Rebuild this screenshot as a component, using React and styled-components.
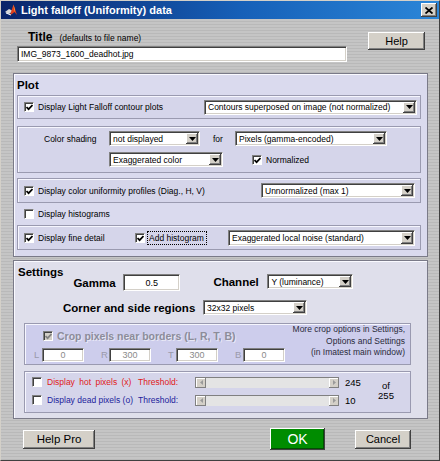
import React from "react";
import styled, { createGlobalStyle } from "styled-components";

const GlobalStyle = createGlobalStyle`
  html, body {
    margin: 0;
    padding: 0;
  }
  body {
    font-family: "Liberation Sans", Arial, sans-serif;
    background: #c0c0c0;
  }
  * {
    box-sizing: border-box;
  }
`;

// Small drawings
const CheckMark = ({ color = "#000" }) => (
  <svg width="7" height="7" viewBox="0 0 7 7">
    <path d="M0.5 3 L2.6 5.2 L6.5 1" fill="none" stroke={color} strokeWidth="1.7" />
  </svg>
);

const DownArrow = () => (
  <svg width="7" height="4" viewBox="0 0 7 4">
    <path d="M0 0 H7 L3.5 4 Z" fill="#000" />
  </svg>
);

const AppIcon = () => (
  <svg width="15" height="14" viewBox="0 0 15 14">
    <path d="M1 9 L5 6 L9 8 L5 11 Z" fill="#d8d8d8" />
    <path d="M6 12 L9.5 1.5 L13 12 L10.5 9 L8 11 Z" fill="#e0401c" />
    <path d="M9.5 1.5 L11 7 L10.5 9 Z" fill="#ffb040" />
    <path d="M2 10 L7 12" stroke="#ffffff" strokeWidth="1" />
  </svg>
);

const CloseIcon = () => (
  <svg width="8" height="7" viewBox="0 0 8 7">
    <path d="M0.5 0.5 L7.5 6.5 M7.5 0.5 L0.5 6.5" stroke="#000" strokeWidth="1.8" />
  </svg>
);

const SideArrow = ({ dir }) => (
  <svg width="3" height="5" viewBox="0 0 3 5">
    <path d={dir === "left" ? "M3 0 V5 L0 2.5 Z" : "M0 0 V5 L3 2.5 Z"} fill="#9a9a9a" />
  </svg>
);

// Window frame
const Window = styled.div`
  width: 440px;
  height: 461px;
  display: flex;
  flex-direction: column;
  border: 1px solid;
  border-color: #d4d0c8 #404040 #404040 #d4d0c8;
  background: repeating-linear-gradient(
    to bottom,
    #c5c5c5 0 2px,
    #b9b9b9 2px 3px
  );
  color: #000;
  font-size: 8.5px;
`;

const TitleBar = styled.div`
  height: 18px;
  flex: none;
  display: flex;
  align-items: center;
  padding: 0 2px 0 3px;
  background: linear-gradient(to right, #0a246a 0%, #1660b8 55%, #2b86d8 100%);
  color: #fff;
  font-size: 11px;
  font-weight: bold;
  gap: 2px;
`;

const TitleText = styled.span`
  flex: 1;
`;

const CloseButton = styled.div`
  width: 16px;
  height: 14px;
  display: flex;
  align-items: center;
  justify-content: center;
  background: #d4d0c8;
  box-shadow: inset -1px -1px 0 #404040, inset 1px 1px 0 #fff,
    inset -2px -2px 0 #808080;
`;

const Content = styled.div`
  flex: 1;
  display: flex;
  flex-direction: column;
  padding: 0 11px 0 12px;
`;

// Header
const Header = styled.div`
  height: 54px;
  padding: 11px 3px 0 4px;
  display: flex;
  justify-content: space-between;
  align-items: flex-start;
`;

const TitleRow = styled.div`
  height: 14px;
  line-height: 14px;
  padding-left: 11px;
  display: flex;
  align-items: baseline;
  gap: 7px;
`;

const BigLabel = styled.span`
  font-size: ${(p) => p.$size || 11.5}px;
  font-weight: bold;
`;

const TextBox = styled.div`
  width: ${(p) => p.$w}px;
  height: ${(p) => p.$h}px;
  margin-top: ${(p) => p.$mt || 0}px;
  display: flex;
  align-items: center;
  justify-content: ${(p) => (p.$center ? "center" : "flex-start")};
  padding: 0 3px;
  background: #fff;
  border: 1px solid;
  border-color: #808080 #fff #fff #808080;
  box-shadow: inset 1px 1px 0 #404040, inset -1px -1px 0 #d4d0c8;
  font-size: ${(p) => p.$fs || 8.5}px;
  color: ${(p) => (p.$disabled ? "#8a8a8a" : "#000")};
`;

const Button = styled.div`
  width: ${(p) => p.$w}px;
  height: ${(p) => p.$h}px;
  margin-top: ${(p) => p.$mt || 0}px;
  margin-left: ${(p) => p.$ml || 0}px;
  display: flex;
  align-items: center;
  justify-content: center;
  background: ${(p) => (p.$green ? "#008c00" : "#d4d0c8")};
  color: ${(p) => (p.$green ? "#fff" : "#000")};
  font-size: ${(p) => p.$fs || 11}px;
  box-shadow: inset -1px -1px 0 #404040, inset 1px 1px 0 #fff,
    inset -2px -2px 0 ${(p) => (p.$green ? "#005000" : "#808080")};
`;

// Panels
const Panel = styled.div`
  padding: ${(p) => p.$pad};
  margin-top: ${(p) => p.$mt || 0}px;
  background: ${(p) => p.$bg};
  border: 1px solid #7a7a88;
  box-shadow: inset 1px 1px 0 #fafaff;
  display: flex;
  flex-direction: column;
`;

const PanelHeading = styled.div`
  height: 14px;
  line-height: 14px;
  font-size: 11.5px;
  font-weight: bold;
  margin-bottom: ${(p) => p.$mb || 0}px;
`;

const SubPanel = styled.div`
  height: ${(p) => (p.$h ? `${p.$h}px` : "auto")};
  margin-top: ${(p) => p.$mt || 0}px;
  margin-left: ${(p) => p.$ml || 0}px;
  width: ${(p) => (p.$w ? `${p.$w}px` : "auto")};
  padding: ${(p) => p.$pad || "0"};
  background: ${(p) => p.$bg || "#d5d5ea"};
  border: 1px solid #9a9ab0;
  box-shadow: inset 1px 1px 0 #f6f6fe;
  display: flex;
  flex-direction: ${(p) => (p.$col ? "column" : "row")};
  align-items: ${(p) => (p.$col ? "stretch" : "center")};
  justify-content: space-between;
`;

const Row = styled.div`
  display: flex;
  align-items: center;
  height: ${(p) => (p.$h ? `${p.$h}px` : "auto")};
  margin-top: ${(p) => p.$mt || 0}px;
  padding-left: ${(p) => p.$pl || 0}px;
`;

const CheckLabel = styled.div`
  display: flex;
  align-items: center;
  gap: 4px;
  width: ${(p) => (p.$w ? `${p.$w}px` : "auto")};
  margin-left: ${(p) => p.$ml || 0}px;
  flex: none;
`;

const Box = styled.span`
  width: 10px;
  height: 10px;
  flex: none;
  display: flex;
  align-items: center;
  justify-content: center;
  background: ${(p) => (p.$disabled ? "#d4d0c8" : "#fff")};
  border: 1px solid;
  border-color: #808080 #fff #fff #808080;
  box-shadow: inset 1px 1px 0 #404040;
  padding: 1px 0 0 1px;
`;

const Focus = styled.span`
  outline: 1px dotted #000;
  outline-offset: 1px;
  padding-right: 1px;
`;

const Checkbox = ({ checked, disabled }) => (
  <Box $disabled={disabled}>{checked && <CheckMark color={disabled ? "#808080" : "#000"} />}</Box>
);

const SelectBox = styled.div`
  width: ${(p) => p.$w}px;
  height: ${(p) => p.$h || 15}px;
  margin-left: ${(p) => p.$ml || 0}px;
  flex: none;
  display: flex;
  align-items: stretch;
  padding: 1px 1px 1px 3px;
  background: #fff;
  border: 1px solid;
  border-color: #808080 #fff #fff #808080;
  box-shadow: inset 1px 1px 0 #404040, inset -1px -1px 0 #d4d0c8;
  font-size: 8.5px;
`;

const SelectText = styled.span`
  flex: 1;
  display: flex;
  align-items: center;
  white-space: nowrap;
  overflow: hidden;
`;

const ArrowButton = styled.span`
  width: 12px;
  flex: none;
  display: flex;
  align-items: center;
  justify-content: center;
  background: #d4d0c8;
  box-shadow: inset -1px -1px 0 #404040, inset 1px 1px 0 #fff,
    inset -2px -2px 0 #808080;
`;

const Dropdown = ({ w, h, ml, children }) => (
  <SelectBox $w={w} $h={h} $ml={ml}>
    <SelectText>{children}</SelectText>
    <ArrowButton>
      <DownArrow />
    </ArrowButton>
  </SelectBox>
);

const Plain = styled.span`
  width: ${(p) => (p.$w ? `${p.$w}px` : "auto")};
  margin-left: ${(p) => p.$ml || 0}px;
  flex: none;
`;

// Settings
const SettingsTop = styled.div`
  display: flex;
  align-items: flex-start;
`;

const FieldGroup = styled.div`
  display: flex;
  align-items: center;
  margin-top: 9px;
  margin-left: ${(p) => p.$ml}px;
`;

const FieldLabel = styled.span`
  width: ${(p) => p.$w}px;
  font-size: 11.5px;
  font-weight: bold;
  flex: none;
`;

const CropBody = styled.div`
  display: flex;
  flex-direction: column;
  padding: 2px 0 0 9px;
`;

const GreyTitle = styled.span`
  font-size: 10.5px;
  font-weight: bold;
  color: #8c8c9a;
  text-shadow: 1px 1px 0 #e8e8f6;
  line-height: 14px;
`;

const CropNote = styled.div`
  align-self: flex-start;
  margin-top: 0;
  padding-right: 5px;
  text-align: right;
  font-size: 8.5px;
  line-height: 11.5px;
  color: #2a2a3a;
`;

const BorderInputs = styled.div`
  display: flex;
  gap: 17px;
  margin-top: 5px;
`;

const BorderField = styled.div`
  display: flex;
  align-items: center;
`;

const BorderLetter = styled.span`
  width: 8px;
  font-size: 9.5px;
  color: #9a9aaa;
`;

const PixelGrid = styled.div`
  display: grid;
  grid-template-columns: 15px 91px 57px 144px 34px 26px;
  grid-template-rows: 18px 18px;
  align-items: center;
  padding: 1px 0 3px 7px;
  height: 42px;
  margin-top: 6px;
  margin-left: 6px;
  width: 387px;
  background: #d5d5ea;
  border: 1px solid #9a9ab0;
  box-shadow: inset 1px 1px 0 #f6f6fe;
`;

const PixelText = styled.span`
  color: ${(p) => p.$color};
  word-spacing: ${(p) => p.$ws || 0}px;
  white-space: nowrap;
`;

const Slider = styled.div`
  height: 11px;
  display: flex;
  background: #e4e4e4;
  border-top: 1px solid #808080;
  border-left: 1px solid #808080;
`;

const SliderButton = styled.span`
  width: 10px;
  flex: none;
  display: flex;
  align-items: center;
  justify-content: center;
  background: #d4d0c8;
  box-shadow: inset -1px -1px 0 #808080, inset 1px 1px 0 #fff;
`;

const Track = styled.span`
  flex: 1;
`;

const Value = styled.span`
  padding-left: 6px;
  font-size: 9.5px;
`;

const OfBlock = styled.div`
  grid-column: 6;
  grid-row: 1 / span 2;
  text-align: center;
  font-size: 9.5px;
  line-height: 10px;
`;

const ThresholdSlider = () => (
  <Slider>
    <SliderButton>
      <SideArrow dir="left" />
    </SliderButton>
    <Track />
    <SliderButton>
      <SideArrow dir="right" />
    </SliderButton>
  </Slider>
);

const BottomBar = styled.div`
  display: flex;
  align-items: center;
  padding: 9px 17px 0 10px;
`;

const App = () => {
  return (
    <>
      <GlobalStyle />
      <Window>
        <TitleBar>
          <AppIcon />
          <TitleText>Light falloff (Uniformity) data</TitleText>
          <CloseButton>
            <CloseIcon />
          </CloseButton>
        </TitleBar>

        <Content>
          <Header>
            <div>
              <TitleRow>
                <BigLabel $size={12}>Title</BigLabel>
                <span>(defaults to file name)</span>
              </TitleRow>
              <TextBox $w={330} $h={16} $mt={2}>
                IMG_9873_1600_deadhot.jpg
              </TextBox>
            </div>
            <Button $w={57} $h={18} $mt={2}>
              Help
            </Button>
          </Header>

          <Panel $bg="#dadaee" $pad="4px 6px 6px 3px">
            <PanelHeading $mb={3}>Plot</PanelHeading>

            <SubPanel $h={24} $pad="0 3px 0 6px">
              <CheckLabel>
                <Checkbox checked />
                Display Light Falloff contour plots
              </CheckLabel>
              <Dropdown w={213}>Contours superposed on image (not normalized)</Dropdown>
            </SubPanel>

            <SubPanel $col $mt={7} $pad="4px 0 5px 0" $h={47}>
              <Row $pl={26}>
                <Plain $w={65}>Color shading</Plain>
                <Dropdown w={91}>not displayed</Dropdown>
                <Plain $w={22} $ml={13}>
                  for
                </Plain>
                <Dropdown w={152}>Pixels (gamma-encoded)</Dropdown>
              </Row>
              <Row $pl={91} $mt={6}>
                <Dropdown w={114}>Exaggerated color</Dropdown>
                <CheckLabel $ml={29}>
                  <Checkbox checked />
                  Normalized
                </CheckLabel>
              </Row>
            </SubPanel>

            <SubPanel $mt={5} $h={25} $pad="0 5px 0 6px">
              <CheckLabel>
                <Checkbox checked />
                Display color uniformity profiles (Diag., H, V)
              </CheckLabel>
              <Dropdown w={154}>Unnormalized (max 1)</Dropdown>
            </SubPanel>

            <Row $h={22} $pl={7}>
              <CheckLabel>
                <Checkbox />
                Display histograms
              </CheckLabel>
            </Row>

            <SubPanel $h={25} $pad="0 5px 0 6px">
              <Row>
                <CheckLabel $w={111}>
                  <Checkbox checked />
                  Display fine detail
                </CheckLabel>
                <CheckLabel $w={93}>
                  <Checkbox checked />
                  <Focus>Add histogram</Focus>
                </CheckLabel>
              </Row>
              <Dropdown w={187} h={16}>
                Exaggerated local noise (standard)
              </Dropdown>
            </SubPanel>
          </Panel>

          <Panel $bg="#dfdfeb" $pad="4px 4px 5px 4px" $mt={3}>
            <SettingsTop>
              <PanelHeading>Settings</PanelHeading>
              <FieldGroup $ml={10}>
                <FieldLabel $w={50}>Gamma</FieldLabel>
                <TextBox $w={57} $h={17} $center $fs={9}>
                  0.5
                </TextBox>
              </FieldGroup>
              <FieldGroup $ml={33}>
                <FieldLabel $w={54}>Channel</FieldLabel>
                <Dropdown w={86} h={15}>
                  Y (luminance)
                </Dropdown>
              </FieldGroup>
            </SettingsTop>

            <Row $mt={9} $pl={45}>
              <FieldLabel $w={140}>Corner and side regions</FieldLabel>
              <Dropdown w={104}>32x32 pixels</Dropdown>
            </Row>

            <SubPanel $mt={8} $ml={6} $w={387} $h={42} $bg="#cdcdec">
              <CropBody>
                <CheckLabel $ml={9}>
                  <Checkbox checked disabled />
                  <GreyTitle>Crop pixels near borders (L, R, T, B)</GreyTitle>
                </CheckLabel>
                <BorderInputs>
                  {[
                    ["L", "0"],
                    ["R", "300"],
                    ["T", "300"],
                    ["B", "0"],
                  ].map(([letter, value]) => (
                    <BorderField key={letter}>
                      <BorderLetter>{letter}</BorderLetter>
                      <TextBox $w={42} $h={14} $center $fs={9} $disabled>
                        {value}
                      </TextBox>
                    </BorderField>
                  ))}
                </BorderInputs>
              </CropBody>
              <CropNote>
                More crop options in Settings,
                <br />
                Options and Settings
                <br />
                (in Imatest main window)
              </CropNote>
            </SubPanel>

            <PixelGrid>
              <Checkbox />
              <PixelText $color="#e01818" $ws={2}>
                Display hot pixels (x)
              </PixelText>
              <PixelText $color="#e01818">Threshold:</PixelText>
              <ThresholdSlider />
              <Value>245</Value>
              <OfBlock>
                of
                <br />
                255
              </OfBlock>
              <Checkbox />
              <PixelText $color="#1c1c9c">Display dead pixels (o)</PixelText>
              <PixelText $color="#1c1c9c">Threshold:</PixelText>
              <ThresholdSlider />
              <Value>10</Value>
            </PixelGrid>
          </Panel>

          <BottomBar>
            <Button $w={72} $h={19} $fs={11.5}>
              Help Pro
            </Button>
            <Button $w={55} $h={22} $fs={14} $green $ml={175}>
              OK
            </Button>
            <Button $w={56} $h={19} $fs={11} $ml={30}>
              Cancel
            </Button>
          </BottomBar>
        </Content>
      </Window>
    </>
  );
};

export default App;
